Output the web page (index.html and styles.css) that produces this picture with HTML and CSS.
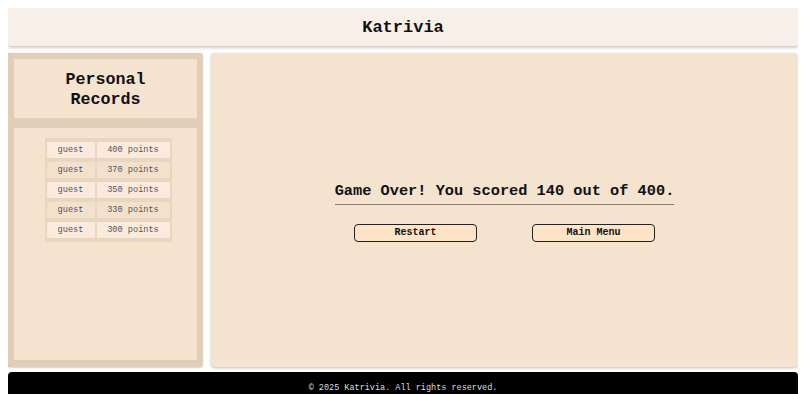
FILE: index.html
```html
<!DOCTYPE html>
<html lang="en">

<head>
    <meta charset="UTF-8">
    <meta name="viewport" content="width=device-width, initial-scale=1.0">
    <title>Katrivia</title>
    <link rel="stylesheet" href="styles.css">
</head>

<body>

    <header class="header">
        <h1>Katrivia</h1>
    </header>

    <div class="layout">
        <aside class="sidebar">
            <div class="sidebar-title">
                <h2>Personal Records</h2>
            </div>
            <div class="sidebar-body">
                <table class="records">
                    <tbody>
                        <tr>
                            <td class="name">guest</td>
                            <td>400 points</td>
                        </tr>
                        <tr>
                            <td class="name">guest</td>
                            <td>370 points</td>
                        </tr>
                        <tr>
                            <td class="name">guest</td>
                            <td>350 points</td>
                        </tr>
                        <tr>
                            <td class="name">guest</td>
                            <td>330 points</td>
                        </tr>
                        <tr>
                            <td class="name">guest</td>
                            <td>300 points</td>
                        </tr>
                    </tbody>
                </table>
            </div>
        </aside>

        <main class="game">
            <div class="result">
                <h3>Game Over! You scored 140 out of 400.</h3>
                <div class="actions">
                    <button type="button">Restart</button>
                    <button type="button">Main Menu</button>
                </div>
            </div>
        </main>
    </div>

    <footer class="footer">
        <p>© 2025 Katrivia. All rights reserved.</p>
    </footer>

</body>

</html>
```

FILE: styles.css
```css
body {
    font-family: "Liberation Mono", "Courier New", monospace;
    background-color: #ffffff;
    color: #111;
    margin: 8px;
}

.header {
    height: 38px;
    background-color: #f8f0e8;
    border-radius: 3px;
    box-shadow: 0 2px 3px rgba(0, 0, 0, 0.2);
    display: flex;
    align-items: center;
    justify-content: center;
}

.header h1 {
    margin: 0;
    font-size: 17px;
    font-weight: bold;
}

.layout {
    display: flex;
    gap: 8px;
    margin-top: 7px;
    height: 314px;
}

.sidebar {
    width: 195px;
    background-color: #e0cfb6;
    border-radius: 3px;
    box-shadow: -1px 0 1px rgba(0, 0, 0, 0.25), 0 1px 2px rgba(0, 0, 0, 0.15);
    padding: 6px 6px 7px 6px;
    box-sizing: border-box;
    display: flex;
    flex-direction: column;
    gap: 10px;
}

.sidebar-title {
    height: 59px;
    background-color: #f3e3cf;
    display: flex;
    align-items: center;
    justify-content: center;
}

.sidebar-title h2 {
    margin: 0;
    padding-top: 2px;
    font-size: 16.7px;
    line-height: 20px;
    text-align: center;
    width: 120px;
}

.sidebar-body {
    flex: 1;
    background-color: #f3e3cf;
    padding-top: 10px;
    padding-left: 5px;
    display: flex;
    justify-content: center;
    align-items: flex-start;
}

.records {
    border-collapse: separate;
    border-spacing: 2px 4px;
    background-color: #e8d6be;
    font-size: 8.6px;
    color: #555;
}

.records td {
    height: 16px;
    padding: 0;
    text-align: center;
    background-color: #fbeade;
}

.records td.name {
    width: 48px;
}

.records td:not(.name) {
    width: 73px;
}

.records tr:nth-child(even) td {
    background-color: #f2e1cd;
}

.game {
    flex: 1;
    background-color: #f3e3cf;
    border-radius: 4px;
    box-shadow: 0 1px 3px rgba(0, 0, 0, 0.25);
    display: flex;
    align-items: center;
    justify-content: center;
}

.result {
    text-align: center;
    margin-top: 2px;
}

.result h3 {
    margin: 0;
    padding-top: 1px;
    font-size: 15.3px;
    font-weight: bold;
    padding-bottom: 4px;
    border-bottom: 1px solid #8a7a6a;
}

.actions {
    display: flex;
    justify-content: center;
    gap: 55px;
    margin-top: 19px;
}

.actions button {
    width: 123px;
    height: 18px;
    font-family: inherit;
    font-size: 10px;
    font-weight: bold;
    color: #111;
    background-color: #fde4c6;
    border: 1px solid #222;
    border-radius: 4px;
    padding: 0;
    cursor: pointer;
}

.actions button:hover {
    background-color: #f8d6b0;
}

.footer {
    margin-top: 5px;
    height: 40px;
    background-color: #000;
    border-radius: 4px 4px 0 0;
    color: #ddd;
    text-align: center;
}

.footer p {
    margin: 0;
    padding-top: 11px;
    font-size: 8.5px;
}
```
